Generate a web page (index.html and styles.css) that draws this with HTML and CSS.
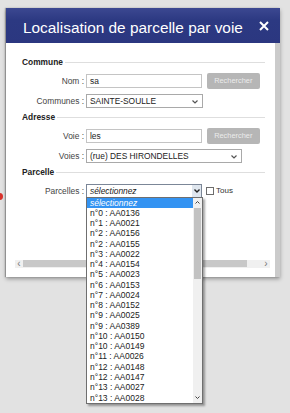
FILE: index.html
```html
<!DOCTYPE html>
<html lang="fr">
<head>
    <meta charset="UTF-8">
    <title>Localisation de parcelle par voie</title>
    <link rel="stylesheet" href="styles.css">
</head>
<body>
<span class="marker"></span>
<div class="dialog">
    <div class="dialog-head">
        <span class="dialog-title">Localisation de parcelle par voie</span>
        <svg class="close" width="10" height="10" viewBox="0 0 10 10"><path d="M1 1L9 9M9 1L1 9" stroke="#fff" stroke-width="2"/></svg>
    </div>
    <div class="dialog-body">
        <div class="legend">Commune</div>
        <div class="row first">
            <label>Nom :</label>
            <div class="field w116">sa</div>
            <button class="btn">Rechercher</button>
        </div>
        <div class="row">
            <label>Communes :</label>
            <div class="field select w117">SAINTE-SOULLE
                <svg class="chev" width="6" height="4" viewBox="0 0 6 4"><path d="M0.5 0.5L3 3L5.5 0.5" fill="none" stroke="#555" stroke-width="1.2"/></svg>
            </div>
        </div>

        <div class="legend mid">Adresse</div>
        <div class="row first">
            <label>Voie :</label>
            <div class="field w116">les</div>
            <button class="btn">Rechercher</button>
        </div>
        <div class="row">
            <label>Voies :</label>
            <div class="field select w156">(rue) DES HIRONDELLES
                <svg class="chev" width="6" height="4" viewBox="0 0 6 4"><path d="M0.5 0.5L3 3L5.5 0.5" fill="none" stroke="#555" stroke-width="1.2"/></svg>
            </div>
        </div>

        <div class="legend mid">Parcelle</div>
        <div class="row first">
            <label>Parcelles :</label>
            <div class="field select open w116">
                <i>sélectionnez</i>
                <span class="arrow-btn"><svg width="6" height="4" viewBox="0 0 6 4"><path d="M0.5 0.5L3 3L5.5 0.5" fill="none" stroke="#222" stroke-width="1.4"/></svg></span>
                <div class="dropdown">
                    <ul id="options" class="options">
                        <li class="active"><i>sélectionnez</i></li>
                    </ul>
                    <div class="vscroll">
                        <span class="up"><svg width="5" height="3" viewBox="0 0 5 3"><path d="M0.5 2.5L2.5 0.5L4.5 2.5" fill="none" stroke="#444" stroke-width="1"/></svg></span>
                        <span class="thumb"></span>
                        <span class="track"></span>
                        <span class="down"><svg width="5" height="3" viewBox="0 0 5 3"><path d="M0.5 0.5L2.5 2.5L4.5 0.5" fill="none" stroke="#444" stroke-width="1"/></svg></span>
                    </div>
                </div>
            </div>
            <span class="check"></span><span class="check-label">Tous</span>
        </div>

        <div class="hscroll">
            <span class="hs-arrow">&lsaquo;</span>
            <span class="hs-thumb"></span>
            <span class="hs-track"></span>
            <span class="hs-arrow">&rsaquo;</span>
        </div>
    </div>
</div>

<script>
const parcelles=["n°0 : AA0136","n°1 : AA0021","n°2 : AA0156","n°2 : AA0155","n°3 : AA0022","n°4 : AA0154","n°5 : AA0023","n°6 : AA0153","n°7 : AA0024","n°8 : AA0152","n°9 : AA0025","n°9 : AA0389","n°10 : AA0150","n°10 : AA0149","n°11 : AA0026","n°12 : AA0148","n°12 : AA0147","n°13 : AA0027","n°13 : AA0028"];
const options=document.getElementById("options");
parcelles.forEach(p=>{
    const li=document.createElement("li");
    li.textContent=p;
    options.appendChild(li);
});
</script>
</body>
</html>
```

FILE: styles.css
```css
*{
    box-sizing: border-box;
}

body{
    margin:0;
    background-color:#e2e2e2;
    font-family: "Liberation Sans", Arial, sans-serif;
    font-size:8.4px;
    color:#333;
    position: relative;
    min-height:413px;
}

.marker{
    position:absolute;
    left:-4px;
    top:193px;
    width:7px;
    height:7px;
    border-radius:50%;
    background-color:#d8332d;
}

.dialog{
    margin:8px 0 0 6px;
    width:274px;
    box-shadow: 0 2px 4px rgba(0,0,0,0.35), -1px 0 1px rgba(0,0,0,0.25);
}

.dialog-head{
    height:35px;
    background: linear-gradient(#3c4891, #2c3982 35%, #2b3780);
    display:flex;
    justify-content: space-between;
    padding:4px 11px 0 17px;
}

.dialog-title{
    color:#fff;
    font-size:15.4px;
    line-height:31px;
    white-space: nowrap;
}

.close{
    margin-top:9px;
}

.dialog-body{
    background-color:#fff;
    border-right:5px solid #cbcbcb;
    padding:14px 0 9px 16px;
}

.legend{
    display:flex;
    align-items:center;
    height:10px;
    font-weight:bold;
    color:#222;
}

.legend::after{
    content:"";
    flex:1;
    height:1px;
    background-color:#dedede;
    margin:0 10px 0 2px;
}

.legend.mid{
    margin-top:4.5px;
}

.row{
    display:flex;
    align-items:center;
    height:14px;
    margin-top:6px;
    position: relative;
}

.row.first{
    margin-top:6.5px;
}

.legend + .row.first{
    margin-top:6.5px;
}

label{
    width:62px;
    margin-right:2px;
    text-align:right;
    color:#444;
}

.field{
    height:14px;
    border:1px solid #c4c4c4;
    padding:0 0 0 3px;
    line-height:12px;
    color:#222;
    position: relative;
    white-space: nowrap;
}

.w116{ width:116px; }
.w117{ width:117px; }
.w156{ width:156px; }

.select{
    border-color:#a9a9a9;
}

.chev{
    position:absolute;
    right:4px;
    top:5px;
}

.select.open{
    border-color:#7b8697;
}

.arrow-btn{
    position:absolute;
    right:0;
    top:0;
    width:9px;
    height:12px;
    background-color:#dfe6ee;
    display:flex;
    align-items:center;
    justify-content:center;
}

.btn{
    margin-left:4.5px;
    width:53.5px;
    height:16px;
    border:0;
    border-radius:2px;
    background-color:#b6b6b6;
    color:#ececec;
    font-family: "Liberation Sans", Arial, sans-serif;
    font-size:7.4px;
    padding:0;
}

.check{
    width:8px;
    height:8px;
    border:1px solid #6d6d6d;
    margin-left:4px;
    background:#fff;
}

.check-label{
    margin-left:2px;
    font-size:8px;
    color:#333;
}

.dropdown{
    position:absolute;
    left:-1px;
    top:12px;
    width:117px;
    height:207px;
    border:1px solid #6f6f6f;
    background-color:#fff;
    box-shadow: 2px 2px 2px rgba(0,0,0,0.35);
    display:flex;
    z-index:2;
}

.options{
    list-style:none;
    margin:0;
    padding:0;
    flex:1;
}

.options li{
    height:10.28px;
    line-height:10.28px;
    padding-left:3px;
    color:#222;
    font-size:8.5px;
}

.options li.active{
    background-color:#3393f2;
    color:#fff;
}

.vscroll{
    width:9px;
    display:flex;
    flex-direction:column;
    background-color:#f0f0f0;
}

.vscroll .up,.vscroll .down{
    height:10px;
    display:flex;
    align-items:center;
    justify-content:center;
}

.vscroll .thumb{
    height:71px;
    margin:0 1px;
    background-color:#c2c2c2;
}

.vscroll .track{
    flex:1;
}

.hscroll{
    display:flex;
    align-items:center;
    height:8px;
    margin:62px 5px 0 -7px;
    background-color:#f0f0f0;
    color:#777;
    font-size:10px;
}

.hs-arrow{
    width:8px;
    text-align:center;
    line-height:8px;
}

.hs-thumb{
    width:224px;
    height:7px;
    background-color:#c8c8c8;
}

.hs-track{
    flex:1;
}
```
